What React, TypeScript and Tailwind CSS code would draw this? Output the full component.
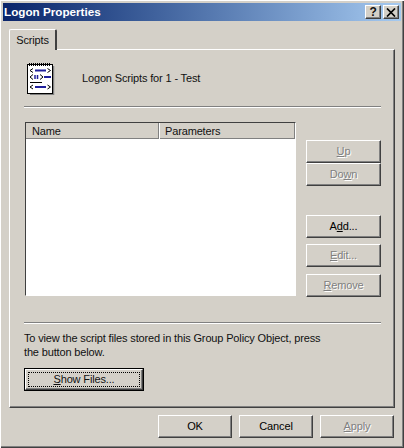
import React from "react";

const bevel =
  "border border-t-white border-l-white border-r-[#404040] border-b-[#404040] shadow-[inset_-1px_-1px_0_#808080]";

function Btn({
  children,
  disabled,
  className = "",
}: {
  children: React.ReactNode;
  disabled?: boolean;
  className?: string;
}) {
  return (
    <div
      className={`flex items-center justify-center bg-[#d4d0c8] pb-[2px] ${bevel} ${
        disabled ? "text-[#808080] [text-shadow:1px_1px_0_#ffffff]" : "text-black"
      } ${className}`}
    >
      <span>{children}</span>
    </div>
  );
}

function Sep({ className = "" }: { className?: string }) {
  return <div className={`h-[2px] border-t border-t-[#808080] border-b border-b-white ${className}`} />;
}

function ScriptIcon() {
  return (
    <svg width="28" height="33" viewBox="0 0 28 33" className="block shrink-0">
      <path d="M3 32.5H26.5V4" stroke="#808080" fill="none" strokeWidth="1.5" />
      <rect x="0.5" y="2.5" width="25" height="29" fill="#ffffff" stroke="#000000" />
      <path d="M2.5 1v3M4.5 1v3M6.5 1v3M8.5 1v3M10.5 1v3M12.5 1v3M14.5 1v3M16.5 1v3M18.5 1v3M20.5 1v3M22.5 1v3" stroke="#000000" fill="none" />
      <g fill="none" stroke="#000000">
        <path d="M6 6.5 L3 8.5 L6 10.5" />
        <path d="M20.5 6.5 L23.5 8.5 L20.5 10.5" />
        <path d="M6 12.5 L3 15 L6 17.5" />
        <path d="M13 12.5 L16 15 L13 17.5" />
        <path d="M6 23 L3 25 L6 27" />
        <path d="M20.5 23 L23.5 25 L20.5 27" />
      </g>
      <path d="M8 8.5h11M8 25h11M17 15h7" stroke="#1f1f9c" strokeWidth="2" fill="none" />
      <path d="M8 13v4M10.5 13v4" stroke="#1f1f9c" strokeWidth="1.5" fill="none" />
      <path d="M3 20.5h12" stroke="#000000" fill="none" />
    </svg>
  );
}

function CaptionBtn({ children }: { children: React.ReactNode }) {
  return (
    <div className={`flex h-[14px] w-[16px] items-center justify-center bg-[#d4d0c8] ${bevel}`}>{children}</div>
  );
}

export default function App() {
  return (
    <div
      className="flex h-[448px] w-[404px] flex-col bg-[#d4d0c8] p-[3px] text-[11px] leading-[14px] tracking-[-0.15px] text-[#111] shadow-[inset_1px_1px_0_#ffffff,inset_-1px_-1px_0_#404040,inset_-2px_-2px_0_#808080]"
      style={{ fontFamily: '"Liberation Sans", Arial, sans-serif' }}
    >
      <div className="flex h-[18px] shrink-0 items-center justify-between bg-gradient-to-r from-[#0a246a] to-[#a6caf0] pl-[1px] pr-[2px]">
        <span className="text-[11.7px] font-bold tracking-normal text-white">Logon Properties</span>
        <div className="flex gap-[2px]">
          <CaptionBtn>
            <span className="text-[12px] font-bold leading-none">?</span>
          </CaptionBtn>
          <CaptionBtn>
            <svg width="10" height="9" viewBox="0 0 10 9">
              <path d="M1 0.5L9 8.5M9 0.5L1 8.5" stroke="#000" strokeWidth="1.7" fill="none" />
            </svg>
          </CaptionBtn>
        </div>
      </div>

      <div className="relative z-10 ml-[6px] mt-[8px] flex h-[21px] w-[48px] shrink-0 items-center justify-center rounded-t-[2px] border-l border-t border-r-2 border-l-white border-t-white border-r-[#404040] bg-[#d4d0c8] pb-[1px]">
        Scripts
      </div>

      <div className="-mt-[1px] ml-[6px] flex h-[359px] w-[386px] shrink-0 flex-col border border-t-white border-l-white border-r-[#404040] border-b-[#404040] pl-[14px] pr-[13px] shadow-[inset_-1px_-1px_0_#808080]">
        <div className="flex h-[56px] shrink-0 items-start pl-[3px] pt-[12px]">
          <ScriptIcon />
          <span className="ml-[27px] mt-[9px]">Logon Scripts for 1 - Test</span>
        </div>
        <Sep className="w-[357px]" />

        <div className="mt-[14px] flex h-[176px] shrink-0">
          <div className="ml-[1px] flex h-[174px] w-[271px] shrink-0 flex-col border border-t-[#404040] border-l-[#404040] border-r-white border-b-white bg-white">
            <div className="flex h-[16px] shrink-0 bg-[#d4d0c8] shadow-[inset_0_-1px_0_#808080,inset_-1px_0_0_#808080]">
              <div className="w-[133px] border-r border-r-[#808080] pl-[6px] pt-[1px] shadow-[1px_0_0_#ffffff]">Name</div>
              <div className="pl-[6px] pt-[1px]">Parameters</div>
            </div>
          </div>

          <div className="ml-[10px] flex w-[75px] shrink-0 flex-col pt-[18px]">
            <Btn disabled className="h-[23px]">
              <u>U</u>p
            </Btn>
            <Btn disabled className="h-[23px]">
              Do<u>w</u>n
            </Btn>
            <Btn className="mt-[29px] h-[23px]">
              A<u>d</u>d...
            </Btn>
            <Btn disabled className="mt-[6px] h-[23px]">
              <u>E</u>dit...
            </Btn>
            <Btn disabled className="mt-[7px] h-[23px]">
              <u>R</u>emove
            </Btn>
          </div>
        </div>

        <Sep className="mt-[24px] w-[357px]" />
        <p className="mt-[7px] w-[310px]">
          To view the script files stored in this Group Policy Object, press the button below.
        </p>
        <div className="mt-[9px] h-[23px] w-[120px] border border-black">
          <div className={`h-full w-full ${bevel} p-[2px]`}>
            <div className="flex h-full w-full items-center justify-center border border-dotted border-black pb-[2px]">
              <span>
                <u>S</u>how Files...
              </span>
            </div>
          </div>
        </div>
      </div>

      <div className="mt-[7px] flex justify-end gap-[7px] pr-[7px]">
        <Btn className="h-[23px] w-[74px]">OK</Btn>
        <Btn className="h-[23px] w-[74px]">Cancel</Btn>
        <Btn disabled className="h-[23px] w-[74px]">
          <u>A</u>pply
        </Btn>
      </div>
    </div>
  );
}
